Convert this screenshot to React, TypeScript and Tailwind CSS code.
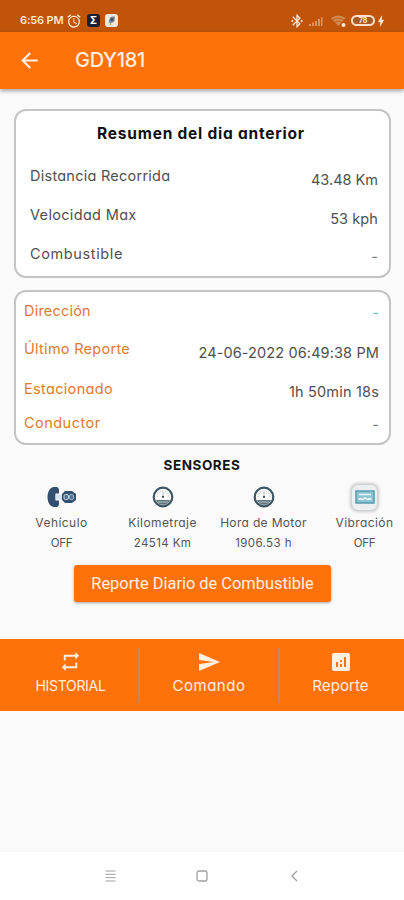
import React from "react";
import { MdRepeat, MdSend, MdAnalytics, MdArrowBack, MdAlarm, MdBluetoothConnected, MdBolt } from "react-icons/md";

const Row = ({ label, value, h, lc, vc, lt, vt, drop = "translate-y-[4px]" }: {
  label: string; value: string; h: string; lc: string; vc: string; lt: string; vt: string; drop?: string;
}) => (
  <div className={`flex items-center justify-between text-[14.5px] ${h}`}>
    <span className={`${lc} ${lt}`}>{label}</span>
    <span className={`${vc} ${vt} ${drop}`}>{value}</span>
  </div>
);

const Gauge = () => (
  <svg width="22" height="22" viewBox="0 0 22 22">
    <circle cx="11" cy="11" r="9.3" fill="#fafafa" stroke="#3c5560" strokeWidth="2.2" />
    <path d="M4 14h14a7.5 7.5 0 0 1-14 0z" fill="#5d757d" />
    <path d="M6 16h10" stroke="#b9c5c8" strokeWidth="1" />
    <path d="M5 11a6 6 0 0 1 12 0" fill="none" stroke="#b3bdc1" strokeWidth="1" strokeDasharray="1.2 1.6" />
    <circle cx="11" cy="10.8" r="1.1" fill="#344b55" />
    <path d="M11 6v4" stroke="#a5b2b7" strokeWidth=".8" />
  </svg>
);

const Ignition = () => (
  <svg width="30" height="22" viewBox="0 0 30 22">
    <path d="M6.500 1h3.500q2 .5 2 3v3.500H8.500v7H12V18q0 2.500-2 3H6.500C2.500 20 .5 16 .5 11S2.500 2 6.500 1z" fill="#34506f" />
    <path d="M8.500 8.500h8v5h-8z" fill="#d3e4f2" />
    <path d="M18 5h7l4 3v6l-4 3h-7l-3-3V8z" fill="#34506f" />
    <rect x="17" y="8.500" width="4.500" height="5" rx="1.500" fill="#52708f" stroke="#c4d7e8" />
    <rect x="22.500" y="8.500" width="4" height="5" rx="1.500" fill="#52708f" stroke="#9fb8ce" />
  </svg>
);

const Vibration = () => (
  <div className="flex h-[25px] w-[25px] items-center justify-center rounded-[6px] bg-[#eceeef] shadow-[0_0_3px_2px_#cbcbcb]">
    <svg width="20" height="14" viewBox="0 0 20 14">
      <rect x="1" y="1" width="18" height="12" fill="#8cc3d0" stroke="#549dae" strokeWidth="1.500" />
      <path d="M4 4.500h12" stroke="#e6f5f8" strokeWidth="1.500" />
      <path d="M3.500 9.500l2-1 2 1.200 2.500-1.700 2.500 1.700 2-1.200 2 1" stroke="#f1fafc" strokeWidth="1.500" fill="none" />
    </svg>
  </div>
);

const Sensor = ({ icon, name, value, nt, vt }: { icon: React.ReactNode; name: string; value: string; nt: string; vt: string }) => (
  <div className="flex w-[101px] shrink-0 flex-col items-center whitespace-nowrap text-[#555]">
    <div className="flex h-[28px] items-center">{icon}</div>
    <span className={`mt-[2px] text-[12px] leading-[20px] ${nt}`}>{name}</span>
    <span className={`text-[11.5px] leading-[21px] ${vt}`}>{value}</span>
  </div>
);

export default function App() {
  return (
    <div className="flex h-[900px] w-[404px] flex-col overflow-hidden bg-[#fafafa] font-['Inter','Noto_Sans',sans-serif] [font-feature-settings:'cv11']">
      <div className="flex h-[32px] shrink-0 items-center bg-[#bf540a] pt-[9px] pl-[20px] text-[#ffe6cf]">
        <span className="w-[45px] whitespace-nowrap text-[11px] font-semibold tracking-[-0.15px]">6:56 PM</span>
        <MdAlarm className="ml-[1px] h-[16px] w-[16px]" />
        <span className="ml-[5px] flex h-[13px] w-[13px] items-center justify-center rounded-[3px] bg-[#1b2036] text-[10px] font-bold text-white">Σ</span>
        <span className="ml-[5px] flex h-[13px] w-[13px] items-center justify-center rounded-[3px] bg-[#eee8df]">
          <svg width="11" height="11" viewBox="0 0 11 11">
            <path d="M2.500 7.500L4 2.500 6 1.500h3L8.500 6 6 8z" fill="#7d8694" />
            <circle cx="6" cy="4.500" r="1.500" fill="#3f4b5f" />
            <circle cx="4.500" cy="9" r="1" fill="#84b63f" />
          </svg>
        </span>
        <MdBluetoothConnected className="ml-[171px] h-[16px] w-[16px]" />
        <svg className="ml-[3px]" width="16" height="12" viewBox="0 0 16 12" fill="#d9945f">
          <path d="M1 9h2v2H1zM4 7.500h2V11H4zM7 6h2v5H7zM10 4h2v7h-2zM13 2h1.500v9H13z" />
        </svg>
        <svg className="ml-[6px]" width="17" height="14" viewBox="0 0 17 14">
          <path d="M1 4Q8 -1 15.500 4L8.300 12z" fill="#d18b55" />
          <path d="M2.500 6Q8 2 14 6M4.500 8.300Q8 6 12 8.300" fill="none" stroke="#bf540a" strokeWidth=".8" />
          <circle cx="13.500" cy="11" r="2" fill="#ffe6cf" />
        </svg>
        <span className="ml-[4px] flex h-[11px] w-[24px] items-center justify-center rounded-full border-2 border-[#ffe0c4] bg-[#a75a25] text-[7px] leading-none font-bold">78</span>
        <MdBolt className="ml-[-1px] h-[14px] w-[14px]" />
      </div>

      <div className="z-10 flex h-[57px] shrink-0 items-center bg-[#ff720b] pl-[17px] text-[#fff0e0] shadow-[0_2px_4px_rgba(0,0,0,0.35)]">
        <MdArrowBack className="h-[25px] w-[25px]" />
        <span className="ml-[33px] -translate-y-[1px] text-[20px] font-medium tracking-[-0.3px]">GDY181</span>
      </div>

      <div className="mx-[14px] mt-[20px] h-[169px] w-[377px] shrink-0 rounded-[12px] border-2 border-[#c4c4c4] bg-white pr-[11px] pl-[14px]">
        <div className="mt-[12px] mb-[11px] h-[22px] -translate-x-[3px] text-center text-[15.5px] leading-[22px] font-bold tracking-[0.78px] text-[#111]">Resumen del dia anterior</div>
        <Row label="Distancia Recorrida" value="43.48 Km" h="h-[39px]" lc="text-[#505050]" vc="text-[#505050]" lt="tracking-[0.25px]" vt="tracking-[0px]" />
        <Row label="Velocidad Max" value="53 kph" h="h-[39px]" lc="text-[#505050]" vc="text-[#505050]" lt="tracking-[0.33px]" vt="tracking-[0.1px]" />
        <Row label="Combustible" value="-" h="h-[39px]" lc="text-[#505050]" vc="text-[#777]" lt="tracking-[0.62px]" vt="tracking-normal" drop="translate-y-[3px]" />
      </div>

      <div className="mx-[14px] mt-[12px] h-[155px] w-[377px] shrink-0 rounded-[12px] border-2 border-[#c4c4c4] bg-white pr-[10px] pl-[8px]">
        <Row label="Dirección" value="-" h="h-[37px]" lc="text-[#dd7b2d]" vc="text-[#65bfc4]" lt="tracking-[0.2px]" vt="tracking-normal" drop="translate-y-[2px]" />
        <Row label="Último Reporte" value="24-06-2022 06:49:38 PM" h="h-[40px]" lc="text-[#dd7b2d]" vc="text-[#505050]" lt="tracking-[0.28px]" vt="tracking-[0.12px]" />
        <Row label="Estacionado" value="1h 50min 18s" h="h-[39px]" lc="text-[#dd7b2d]" vc="text-[#505050]" lt="tracking-[0.33px]" vt="tracking-[0.18px]" drop="translate-y-[3px]" />
        <Row label="Conductor" value="-" h="h-[29px]" lc="text-[#dd7b2d]" vc="text-[#777]" lt="tracking-[0.47px]" vt="tracking-normal" drop="translate-y-[2px]" />
      </div>

      <div className="mt-[9px] h-[22px] shrink-0 text-center text-[13.5px] leading-[22px] font-bold tracking-[0.55px] text-[#151515]">SENSORES</div>
      <div className="mt-[7px] flex h-[76px] shrink-0 pl-[11px]">
        <Sensor icon={<Ignition />} name="Vehículo" value="OFF" nt="tracking-[0.45px]" vt="tracking-[-0.3px]" />
        <Sensor icon={<Gauge />} name="Kilometraje" value="24514 Km" nt="tracking-[0.4px]" vt="tracking-[0.4px]" />
        <Sensor icon={<Gauge />} name="Hora de Motor" value="1906.53 h" nt="tracking-[0.33px]" vt="tracking-[0.4px]" />
        <Sensor icon={<Vibration />} name="Vibración" value="OFF" nt="tracking-[0.4px]" vt="tracking-[-0.3px]" />
      </div>

      <button className="mt-[6px] ml-[74px] h-[37px] w-[257px] shrink-0 rounded-[3px] bg-[#ff720b] pt-px font-['Roboto',sans-serif] text-[16.4px] text-[#fff0e0] shadow-[0_1px_3px_rgba(0,0,0,0.35)]">Reporte Diario de Combustible</button>

      <div className="mt-[37px] flex h-[72px] shrink-0 bg-[#ff720b] text-[14px] text-[#fff0e0]">
        <div className="flex w-[138px] shrink-0 flex-col items-center pt-[11px] pl-[3px]">
          <MdRepeat className="h-[23px] w-[23px]" />
          <span className="mt-[2px] leading-[22px] tracking-[-0.3px]">HISTORIAL</span>
        </div>
        <div className="mt-[9px] mb-[8px] w-[2px] shrink-0 bg-[#d08450]" />
        <div className="flex w-[138px] shrink-0 flex-col items-center pt-[11px]">
          <MdSend className="h-[24px] w-[24px]" />
          <span className="mt-[1px] text-[15px] leading-[22px] tracking-[0.5px]">Comando</span>
        </div>
        <div className="mt-[9px] mb-[8px] w-[2px] shrink-0 bg-[#d08450]" />
        <div className="flex w-[121px] shrink-0 flex-col items-center pt-[11px]">
          <MdAnalytics className="h-[24px] w-[24px]" />
          <span className="mt-[1px] text-[15px] leading-[22px] tracking-[0.1px]">Reporte</span>
        </div>
      </div>

      <div className="mt-auto flex h-[48px] shrink-0 items-center bg-white pl-[105px] text-[#a0a0a0]">
        <svg width="11" height="12" viewBox="0 0 11 12" stroke="currentColor"><path d="M.5 1h10M.5 4.300h10M.5 7.600h10M.5 11h10" /></svg>
        <svg className="ml-[80px]" width="12" height="12" viewBox="0 0 12 12" fill="none" stroke="currentColor" strokeWidth="1.300"><rect x="1" y="1" width="10" height="10" rx="2" /></svg>
        <svg className="ml-[82px]" width="8" height="12" viewBox="0 0 8 12" fill="none" stroke="currentColor" strokeWidth="1.300"><path d="M7 1L2 6l5 5" /></svg>
      </div>
    </div>
  );
}
